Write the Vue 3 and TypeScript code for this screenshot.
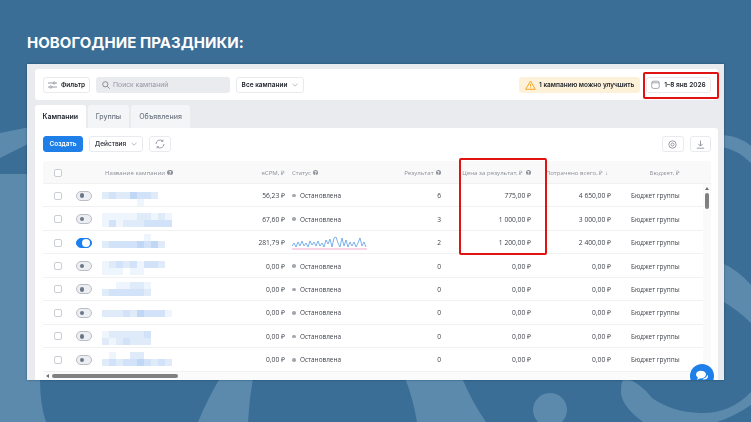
<script setup lang="ts">
interface Campaign {
  on: boolean
  nameTop: number
  name: string[]
  ecpm: string
  chart: boolean
  result: string
  price: string
  spent: string
}

const shades = ['transparent', '#eff5fd', '#e0ebfa', '#d2e2f8', '#c0d7f6']

const campaigns: Campaign[] = [
  { on: false, nameTop: 7, name: ['23224332', '00000100'], ecpm: '56,23 ₽', chart: false, result: '6', price: '775,00 ₽', spent: '4 650,00 ₽' },
  { on: false, nameTop: 4.5, name: ['1111122121', '1312223333'], ecpm: '67,60 ₽', chart: false, result: '3', price: '1 000,00 ₽', spent: '3 000,00 ₽' },
  { on: true, nameTop: 2, name: ['000000100', '233334342'], ecpm: '281,79 ₽', chart: true, result: '2', price: '1 200,00 ₽', spent: '2 400,00 ₽' },
  { on: false, nameTop: 6, name: ['123231332', '111011000'], ecpm: '0,00 ₽', chart: false, result: '0', price: '0,00 ₽', spent: '0,00 ₽' },
  { on: false, nameTop: 3, name: ['0011221', '2333332'], ecpm: '0,00 ₽', chart: false, result: '0', price: '0,00 ₽', spent: '0,00 ₽' },
  { on: false, nameTop: 8, name: ['2223243331'], ecpm: '0,00 ₽', chart: false, result: '0', price: '0,00 ₽', spent: '0,00 ₽' },
  { on: false, nameTop: 5, name: ['1222223', '2123222'], ecpm: '0,00 ₽', chart: false, result: '0', price: '0,00 ₽', spent: '0,00 ₽' },
  { on: false, nameTop: 2.5, name: ['0100220000', '2323343232'], ecpm: '0,00 ₽', chart: false, result: '0', price: '0,00 ₽', spent: '0,00 ₽' }
]

const spark = '0,11 2,8 4,12 6,7 8,11 10,6 12,11 14,8 16,12 18,6 20,10 22,7 24,11 26,6 28,11 30,8 32,12 34,5 36,9 38,4 40,12 42,3 44,2 46,8 48,12 50,3 52,11 54,5 56,12 58,7 60,11 62,7 64,12 66,8 68,3 70,11 72,7 74,12'
</script>

<template>
  <div class="page">
    <svg class="decor" viewBox="0 0 751 422" width="751" height="422">
      <g fill="#5b8aad">
        <path d="M0 133 L30 127 L30 143 L0 158 Z" />
        <path d="M0 174 L40 174 L40 380 Q40 405 46 422 L0 422 Z" />
        <path d="M220 378 L253 378 Q249 400 248 422 L198 422 Q208 398 220 378 Z" />
        <path d="M405 378 L462 378 Q472 402 486 422 L417 422 Q413 398 405 378 Z" />
        <circle cx="550" cy="410" r="17" />
        <path d="M722 135 Q740 136 751 146 L751 163 Q738 150 722 147 Z" />
        <path d="M722 263 Q738 270 751 285 L751 323 Q738 310 722 301 Z" />
        <path d="M624 378 Q640 382 652 398 Q672 412 700 413 Q730 414 751 392 L751 405 Q735 416 717 422 L643 422 Q620 405 621 390 Q621 382 624 378 Z" />
      </g>
    </svg>

    <h1 class="title">НОВОГОДНИЕ ПРАЗДНИКИ:</h1>

    <div class="panel">
      <div class="toolbar">
        <button class="btn filter">
          <svg width="9" height="8" viewBox="0 0 9 8" fill="none" stroke="#7d8490" stroke-width=".8">
            <path d="M0 2h5M7.500 2H9M0 6h1.500M4 6h5" />
            <circle cx="6.200" cy="2" r="1.100" />
            <circle cx="2.800" cy="6" r="1.100" />
          </svg>
          Фильтр
        </button>
        <div class="search">
          <svg width="8" height="8" viewBox="0 0 8 8" fill="none" stroke="#7d8490" stroke-width=".9">
            <circle cx="3.300" cy="3.300" r="2.600" />
            <path d="M5.300 5.300L7.600 7.600" />
          </svg>
          <span>Поиск кампаний</span>
        </div>
        <button class="btn select">
          Все кампании
          <svg width="6" height="4" viewBox="0 0 6 4" fill="none" stroke="#9aa0aa" stroke-width=".7"><path d="M.5.8L3 3.200 5.500.8" /></svg>
        </button>
        <div class="warn">
          <svg width="11" height="10" viewBox="0 0 11 10" fill="none" stroke="#f5a623" stroke-width="1">
            <path d="M5.500 1L10.300 9.300H.7Z" stroke-linejoin="round" />
            <path d="M5.500 3.800V6.600M5.500 7.400V8.200" stroke-width=".9" />
          </svg>
          1 кампанию можно улучшить
        </div>
        <button class="btn date">
          <svg width="9" height="9" viewBox="0 0 9 9" fill="none" stroke="#7d8490" stroke-width=".7">
            <rect x=".8" y="1.200" width="7.400" height="7.200" rx="1.600" />
            <path d="M.8 2.800h7.400" />
          </svg>
          1–8 янв 2026
        </button>
      </div>

      <div class="tabs">
        <div class="tab active">Кампании</div>
        <div class="tab">Группы</div>
        <div class="tab">Объявления</div>
      </div>

      <div class="content">
        <div class="actions">
          <button class="btn create">Создать</button>
          <button class="btn acts">
            Действия
            <svg width="6" height="4" viewBox="0 0 6 4" fill="none" stroke="#9aa0aa" stroke-width=".7"><path d="M.5.8L3 3.200 5.500.8" /></svg>
          </button>
          <button class="btn square">
            <svg width="10" height="10" viewBox="0 0 10 10" fill="none" stroke="#7d8490" stroke-width=".8">
              <path d="M1 5a4 4 0 0 1 6.600-3M9 5a4 4 0 0 1-6.600 3" />
              <path d="M7.900.6V2.400H6.100M2.100 9.400V7.600H3.900" stroke-width=".7" />
            </svg>
          </button>
          <button class="btn square push">
            <svg width="9" height="9" viewBox="0 0 9 9" fill="none" stroke="#7d8490" stroke-width=".8">
              <circle cx="4.500" cy="4.500" r="3.700" />
              <circle cx="4.500" cy="4.500" r="1.500" />
            </svg>
          </button>
          <button class="btn square">
            <svg width="9" height="9" viewBox="0 0 9 9" fill="none" stroke="#7d8490" stroke-width=".8">
              <path d="M4.500 .5V6M2.300 3.900L4.500 6.100 6.700 3.900M.8 8.200h7.400" />
            </svg>
          </button>
        </div>

        <div class="table">
          <div class="row head">
            <div class="cell center"><span class="check" /></div>
            <div class="cell" />
            <div class="cell name-head">Название кампании <i class="help">?</i></div>
            <div class="cell num">eCPM, ₽</div>
            <div class="cell status">Статус <i class="help">?</i></div>
            <div class="cell num">Результат <i class="help">?</i></div>
            <div class="cell num">Цена за результат, ₽ <i class="help">?</i></div>
            <div class="cell num spent-head">Потрачено всего, ₽ ↓</div>
            <div class="cell num budget-head">Бюджет, ₽</div>
          </div>
          <div class="body">
            <div class="rows">
              <div v-for="(c, i) in campaigns" :key="i" class="row">
                <div class="cell center"><span class="check" /></div>
                <div class="cell"><span class="toggle" :class="{ on: c.on }"><b /></span></div>
                <div class="cell mosaic" :style="{ paddingTop: c.nameTop + 'px' }">
                  <div v-for="(line, l) in c.name" :key="l" class="mosaic-line">
                    <span
                      v-for="(s, k) in line.split('')"
                      :key="k"
                      :style="{ background: shades[Number(s)] }"
                    />
                  </div>
                </div>
                <div class="cell num">{{ c.ecpm }}</div>
                <div class="cell status">
                  <svg v-if="c.chart" class="spark" width="76" height="16" viewBox="0 0 76 16">
                    <polyline :points="spark" fill="none" stroke="#5a9ee8" stroke-width=".8" />
                    <path d="M0 14h75" stroke="#f3a9cf" stroke-width="1" />
                  </svg>
                  <template v-else><i class="dot" />Остановлена</template>
                </div>
                <div class="cell num">{{ c.result }}</div>
                <div class="cell num">{{ c.price }}</div>
                <div class="cell num">{{ c.spent }}</div>
                <div class="cell budget">Бюджет группы</div>
              </div>
            </div>
            <div class="vscroll">
              <i class="arrow-up" />
              <i class="vthumb" />
            </div>
          </div>
          <div class="hscroll">
            <i class="arrow-left" />
            <i class="hthumb" />
          </div>
        </div>
      </div>

      <div class="chat">
        <svg width="14" height="12" viewBox="0 0 14 12" fill="#fff">
          <ellipse cx="6" cy="4.600" rx="5" ry="3.900" />
          <path d="M3 7l-1 3 3.500-2z" />
          <path d="M9 9.600c2.200 0 4-1.200 4-3 0-.7-.3-1.300-.7-1.800C12 7 10 8.500 7.500 8.900 7.900 9.400 8.400 9.600 9 9.600z" />
        </svg>
      </div>
    </div>

    <div class="mark mark-date" />
    <div class="mark mark-price" />
  </div>
</template>

<style scoped>
.page {
  position: relative;
  width: 751px;
  height: 422px;
  overflow: hidden;
  background: #3b6e96;
  font-family: "Inter", "Noto Sans", sans-serif;
}
.decor {
  position: absolute;
  left: 0;
  top: 0;
}
.title {
  position: relative;
  margin: 0;
  height: 64px;
  box-sizing: border-box;
  padding: 34px 0 0 27px;
  font-family: "Inter", sans-serif;
  font-size: 15px;
  line-height: 18px;
  font-weight: 700;
  letter-spacing: .05px;
  color: #fff;
}
.panel {
  position: relative;
  width: 697px;
  height: 316px;
  margin-left: 27px;
  box-sizing: border-box;
  padding: 5px 6px 0 8px;
  overflow: hidden;
  background: #e9ebef;
  box-shadow: 0 0 2px rgba(20, 50, 80, .6);
  filter: blur(.25px);
}
button {
  font-family: inherit;
  padding: 0;
  margin: 0;
}
.toolbar {
  display: flex;
  align-items: center;
  height: 31px;
  box-sizing: border-box;
  padding: 0 7px 0 8px;
  background: #fff;
  border-radius: 3px;
  margin-bottom: 5px;
}
.btn {
  display: flex;
  align-items: center;
  justify-content: center;
  height: 16px;
  box-sizing: border-box;
  background: #fff;
  border: 1px solid #e8eaee;
  border-radius: 3px;
  font-size: 6.500px;
  font-weight: 600;
  color: #23272e;
  white-space: nowrap;
}
.filter {
  width: 47px;
  gap: 4px;
}
.search {
  display: flex;
  align-items: center;
  gap: 3px;
  width: 134px;
  height: 16px;
  box-sizing: border-box;
  margin-left: 6px;
  padding-left: 6px;
  background: #e9ebef;
  border-radius: 3px;
  font-size: 6.800px;
  color: #9298a3;
}
.select {
  width: 68px;
  gap: 5px;
  margin-left: 6px;
}
.warn {
  display: flex;
  align-items: center;
  gap: 3px;
  width: 121px;
  height: 16px;
  box-sizing: border-box;
  margin-left: auto;
  padding-left: 6px;
  background: #fdf1d9;
  border-radius: 3px;
  font-size: 6.500px;
  font-weight: 600;
  color: #23272e;
  white-space: nowrap;
}
.date {
  width: 65px;
  gap: 4px;
  margin-left: 6px;
}
.tabs {
  display: flex;
  gap: 2px;
  height: 23px;
}
.tab {
  display: flex;
  align-items: center;
  justify-content: center;
  padding: 0 8px;
  background: #f4f5f7;
  border-radius: 3px 3px 0 0;
  font-size: 7px;
  font-weight: 500;
  color: #6f7682;
}
.tab.active {
  padding: 0 7.500px;
  background: #fff;
  font-weight: 600;
  color: #23272e;
}
.content {
  height: 252px;
  box-sizing: border-box;
  padding: 8px 7px 0 8px;
  background: #fff;
  border-radius: 0 3px 0 0;
}
.actions {
  display: flex;
  align-items: center;
  gap: 6px;
  height: 16px;
  margin-bottom: 9px;
}
.create {
  width: 40px;
  background: #1f7fe8;
  border-color: #1f7fe8;
  color: #fff;
}
.acts {
  width: 54px;
  gap: 5px;
  font-weight: 500;
}
.square {
  width: 21.500px;
}
.push {
  margin-left: auto;
}
.table {
  border-radius: 3px;
}
.row {
  display: grid;
  grid-template-columns: 30px 29px 139px 48px 91px 65px 90px 80px 88px;
  align-items: center;
  height: 23.450px;
  box-sizing: border-box;
  padding-top: 1px;
  border-bottom: 1px solid #f0f1f3;
  font-family: "Open Sans", sans-serif;
  font-size: 6.700px;
  color: #3d424a;
  white-space: nowrap;
}
.head {
  width: 668px;
  height: 23px;
  grid-template-columns: 30px 29px 139px 48px 91px 65px 90px 80px 96px;
  background: #f9f9fa;
  color: #8b9099;
  border-radius: 3px 3px 0 0;
  font-size: 6.100px;
}
.cell {
  display: flex;
  align-items: center;
  min-width: 0;
}
.center {
  justify-content: center;
}
.num {
  justify-content: flex-end;
  padding-right: 4px;
}
.name-head {
  padding-left: 3px;
}
.status {
  padding-left: 3px;
  font-size: 6.400px;
}
.head .status {
  font-size: 6.100px;
}
.spent-head {
  padding-right: 7px;
}
.budget-head {
  padding-right: 31px;
}
.budget {
  padding-left: 16px;
  font-size: 6.400px;
}
.help {
  display: inline-flex;
  align-items: center;
  justify-content: center;
  width: 5.500px;
  height: 5.500px;
  margin-left: 2px;
  border-radius: 50%;
  background: #8b9099;
  color: #fff;
  font-size: 4.500px;
  font-style: normal;
  font-weight: 700;
}
.check {
  display: block;
  width: 8px;
  height: 8px;
  box-sizing: border-box;
  border: 1px solid #c9cdd4;
  border-radius: 2px;
  background: #fff;
}
.toggle {
  display: flex;
  align-items: center;
  width: 15.500px;
  height: 10px;
  box-sizing: border-box;
  margin-left: 3px;
  padding-left: 2.500px;
  background: #eceef1;
  border: 1px solid #b9bdc5;
  border-radius: 5px;
}
.toggle b {
  display: block;
  width: 4.500px;
  height: 4.500px;
  border-radius: 50%;
  background: #6b7689;
}
.toggle.on {
  justify-content: flex-end;
  padding: 0 .5px 0 0;
  background: #1a7ff0;
  border-color: #1a7ff0;
}
.toggle.on b {
  width: 8px;
  height: 8px;
  background: #fff;
}
.mosaic {
  display: block;
  align-self: start;
}
.mosaic-line {
  display: flex;
  height: 7px;
}
.mosaic-line span {
  width: 7px;
  height: 7px;
}
.dot {
  display: inline-block;
  width: 3.500px;
  height: 3.500px;
  margin: 0 4.500px 0 0;
  border-radius: 50%;
  background: #a3a7ae;
}
.spark {
  display: block;
}
.body {
  display: flex;
}
.rows {
  width: 660px;
}
.vscroll {
  display: flex;
  flex-direction: column;
  align-items: center;
  width: 8px;
  padding-top: 3px;
  background: #fafafa;
}
.arrow-up {
  width: 0;
  height: 0;
  border-left: 2.500px solid transparent;
  border-right: 2.500px solid transparent;
  border-bottom: 3.500px solid #6f6f6f;
}
.vthumb {
  width: 4px;
  height: 16px;
  margin-top: 2.500px;
  border-radius: 2px;
  background: #808080;
}
.hscroll {
  display: flex;
  align-items: center;
  height: 9px;
  background: #fbfbfb;
  width: 668px;
  padding-left: 3px;
  box-sizing: border-box;
}
.arrow-left {
  width: 0;
  height: 0;
  border-top: 2.500px solid transparent;
  border-bottom: 2.500px solid transparent;
  border-right: 3.500px solid #6f6f6f;
}
.hthumb {
  width: 126px;
  height: 4px;
  margin-left: 3px;
  border-radius: 2px;
  background: #808080;
}
.chat {
  position: absolute;
  left: 663px;
  top: 300px;
  display: flex;
  align-items: center;
  justify-content: center;
  width: 24px;
  height: 24px;
  border-radius: 50%;
  background: #1f7fe8;
}
.mark {
  position: absolute;
  box-sizing: border-box;
  border: 2px solid #e01212;
  border-radius: 2px;
}
.mark-date {
  left: 642.500px;
  top: 72px;
  width: 76px;
  height: 26.500px;
}
.mark-price {
  left: 458.500px;
  top: 158px;
  width: 88px;
  height: 96.500px;
}
</style>
